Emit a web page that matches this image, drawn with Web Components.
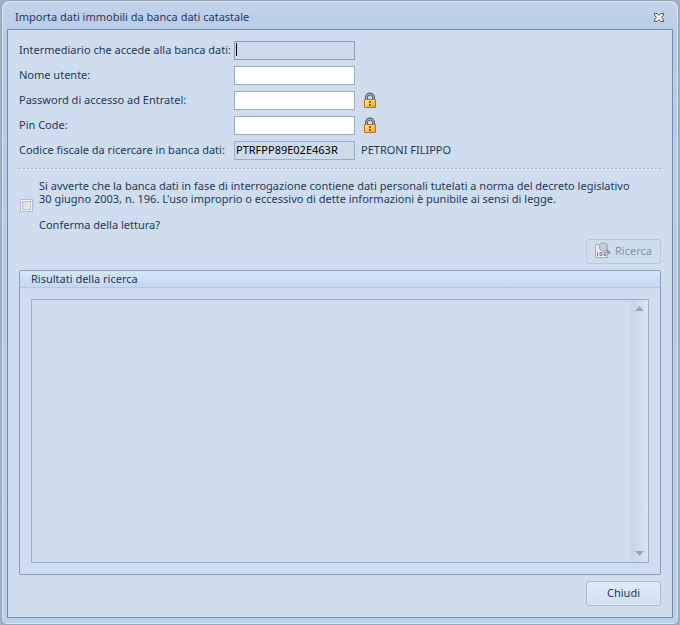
<!DOCTYPE html>
<html lang="it">
<head>
<meta charset="utf-8">
<meta name="viewport" content="width=device-width, initial-scale=1">
<title>Importa dati immobili da banca dati catastale</title>
<style>
:root {
    --color-text: #1e395b;
    --color-panel: #cfddee;
    --color-frame: #6f8fb0;
    --color-border: #9babc8;
    --color-group: #849dbd;
}

body {
    margin: 0;
    min-height: 100vh;
    display: flex;
    background: #a3adbc;
    color: var(--color-text);
    font: 11px/13px "Noto Sans", "Open Sans", sans-serif;
}
</style>
</head>
<body>
<imm-dialog title-text="Importa dati immobili da banca dati catastale">
    <imm-form>
        <imm-field label="Intermediario che accede alla banca dati:" state="active"></imm-field>
        <imm-field label="Nome utente:"></imm-field>
        <imm-field label="Password di accesso ad Entratel:" type="password"><imm-lock></imm-lock></imm-field>
        <imm-field label="Pin Code:" type="password"><imm-lock></imm-lock></imm-field>
        <imm-field label="Codice fiscale da ricercare in banca dati:" value="PTRFPP89E02E463R" state="readonly">PETRONI FILIPPO</imm-field>
    </imm-form>
    <imm-consent>
        Si avverte che la banca dati in fase di interrogazione contiene dati personali tutelati a norma del decreto legislativo
        30 giugno 2003, n. 196. L'uso improprio o eccessivo di dette informazioni è punibile ai sensi di legge.
        <br><br>Conferma della lettura?
    </imm-consent>
    <imm-button disabled><imm-search-icon></imm-search-icon>Ricerca</imm-button>
    <imm-group heading="Risultati della ricerca">
        <imm-list></imm-list>
    </imm-group>
    <imm-button>Chiudi</imm-button>
</imm-dialog>

<script>
class Base extends HTMLElement {
    connectedCallback() {
        const template = document.createElement("template");
        template.innerHTML = `<style>* { box-sizing: border-box; }</style>${this.render()}`;
        this.attachShadow({ mode: "open" }).appendChild(template.content.cloneNode(true));
    }

    attr(name) {
        return this.getAttribute(name) || "";
    }
}

/* Window frame with title bar */
class Dialog extends Base {
    render() {
        return `
        <style>
        :host {
            flex: 1;
            display: flex;
            box-sizing: border-box;
            min-width: 0;
            padding: 0 1px;
        }
        section {
            flex: 1;
            min-width: 0;
            display: flex;
            flex-direction: column;
            padding: 0 5px 6px;
            border: 1px solid #98a6ba;
            border-radius: 8px 8px 6px 6px;
            box-shadow: inset 0 0 0 1px #d9e5f3;
            background: linear-gradient(#c3d4eb, #b9cce5 30px, #bccfe7);
        }
        header {
            height: 28px;
            display: flex;
            align-items: center;
            justify-content: space-between;
            padding: 4px 8px 0;
            box-sizing: border-box;
        }
        h1 {
            margin: 0;
            font-size: 11px;
            line-height: 16px;
            font-weight: normal;
        }
        button {
            padding: 0;
            border: 0;
            background: none;
            display: flex;
        }
        main {
            flex: 1;
            display: flex;
            flex-direction: column;
            padding: 8px 11px 11px;
            border: 1px solid var(--color-frame);
            background: var(--color-panel);
        }
        ::slotted(imm-button) { align-self: flex-end; }
        </style>
        <section role="dialog" aria-labelledby="title">
            <header>
                <h1 id="title">${this.attr("title-text")}</h1>
                <button type="button" aria-label="Chiudi finestra">
                    <svg width="12" height="11" viewBox="0 0 12 11">
                        <path d="M1.500 1.500h2.500l2 2 2-2h2.500v1.500L8.500 5.500l2 2.500v1.500H8l-2-2-2 2H1.500V8l2-2.500-2-2.500z" fill="#fff" stroke="#4a4f63" stroke-linejoin="round"/>
                    </svg>
                </button>
            </header>
            <main><slot></slot></main>
        </section>`;
    }
}

class Form extends Base {
    render() {
        return `
        <style>
        :host {
            display: flex;
            flex-direction: column;
            padding: 0 0 5px;
        }
        div {
            height: 2px;
            margin-top: 5px;
            background:
                repeating-linear-gradient(90deg, #a8b6ca 0 2px, transparent 2px 4px) 0 0 / 100% 1px no-repeat,
                repeating-linear-gradient(90deg, #edf3fa 0 2px, transparent 2px 4px) 1px 1px / 100% 1px no-repeat;
        }
        </style>
        <slot></slot>
        <div role="separator"></div>`;
    }
}

class Field extends Base {
    render() {
        const state = this.attr("state");
        return `
        <style>
        :host {
            display: grid;
            grid-template-columns: 215px 121px auto;
            align-items: center;
            height: 25px;
        }
        input {
            width: 100%;
            height: 19px;
            margin: 0;
            padding: 0 1px 2px;
            border: 1px solid var(--color-border);
            border-radius: 0;
            outline: 0;
            background: #fff;
            color: #000;
            font: inherit;
        }
        input[readonly] { background: #cedbeb; }
        label {
            padding-bottom: 2px;
            white-space: nowrap;
        }
        .active {
            border-color: #8ba0be;
            /* text cursor */
            background: linear-gradient(#000, #000) 1px 1px / 1px 13px no-repeat #cedbeb;
        }
        span { padding: 0 0 2px 6px; }
        ::slotted(imm-lock) { margin-bottom: -2px; }
        </style>
        <label for="field">${this.attr("label")}</label>
        <input id="field" type="${this.attr("type") || "text"}" value="${this.attr("value")}" class="${state}" ${state === "readonly" ? "readonly" : ""}>
        <span><slot></slot></span>`;
    }
}

class Lock extends Base {
    render() {
        return `
        <style>
        :host { display: block; height: 17px; padding-left: 2px; }
        svg { display: block; }
        </style>
        <svg width="14" height="17" viewBox="0 0 14 17">
            <defs>
                <linearGradient id="gold" x2="1" y2="1">
                    <stop stop-color="#ffefad"/>
                    <stop offset=".55" stop-color="#ffc947"/>
                    <stop offset="1" stop-color="#f19b14"/>
                </linearGradient>
            </defs>
            <path d="M3.500 8V5.500a3.500 3.500 0 0 1 7 0V8" fill="none" stroke="#596069" stroke-width="3"/>
            <path d="M3.500 8V5.500a3.500 3.500 0 0 1 7 0V8" fill="none" stroke="#b4bac1" stroke-width="1"/>
            <rect x="1.500" y="7.500" width="11" height="8" rx=".5" fill="url(#gold)" stroke="#b96d20"/>
            <path d="M6 9h2v2H6zM6 12h2v2H6z" fill="#74604a"/>
        </svg>`;
    }
}

class Consent extends Base {
    render() {
        return `
        <style>
        :host { display: block; padding-bottom: 8px; }
        label {
            display: grid;
            grid-template-columns: 20px 1fr;
            align-items: center;
            padding: 4px 0 0;
        }
        input {
            appearance: none;
            width: 13px;
            height: 13px;
            margin: 0 0 0 1px;
            border: 1px solid #a9bcda;
            background: linear-gradient(135deg, #d5d7da, #f2f3f4) content-box, #f5f6f8;
            padding: 2px;
            box-shadow: inset 0 0 0 1px #f4f6f8, inset 0 0 0 2px #b6bbc4;
        }
        span { max-width: 600px; }
        </style>
        <label><input type="checkbox"><span><slot></slot></span></label>`;
    }
}

class Button extends Base {
    render() {
        return `
        <style>
        :host { display: block; }
        button {
            width: 75px;
            height: 25px;
            display: flex;
            align-items: center;
            justify-content: center;
            gap: 4px;
            padding: 0 0 2px;
            border: 1px solid #abbad0;
            border-radius: 3px;
            background: linear-gradient(#e1ecf8, #d1dfee);
            box-shadow: inset 0 0 0 1px #e0eaf5;
            color: var(--color-text);
            font: inherit;
        }
        button:disabled {
            border-color: #b6c8dc;
            background: #cfdeec;
            box-shadow: none;
            color: #8391a9;
        }
        </style>
        <button type="button" ${this.hasAttribute("disabled") ? "disabled" : ""}><slot></slot></button>`;
    }
}

class SearchIcon extends Base {
    render() {
        return `
        <style>
        :host, svg { display: block; }
        </style>
        <svg width="16" height="17" viewBox="0 0 16 17" fill="none">
            <path d="M.5 2.500h12v13H.5z" fill="#e8ecf1" stroke="#a7afba"/>
            <path d="M2.500 10v4M5 10.500h2v3H5zM9 10.500h2v3H9z" stroke="#818a96"/>
            <circle cx="8.500" cy="5" r="4" fill="#d2dae4" stroke="#a3acb8" stroke-width="1.500"/>
            <circle cx="8.500" cy="5" r="1.500" fill="#edf1f5" stroke="#9ba5b2"/>
            <path d="m11.500 8 3.500 3.500" stroke="#8f99a7" stroke-width="2.500"/>
        </svg>`;
    }
}

class Group extends Base {
    render() {
        return `
        <style>
        :host {
            flex: 1;
            display: flex;
            margin: 6px 0;
        }
        section {
            flex: 1;
            display: flex;
            flex-direction: column;
            border: 1px solid var(--color-group);
            border-radius: 2px;
        }
        h2 {
            margin: 0;
            padding: 1px 11px 2px;
            border-bottom: 1px solid #b2c7e2;
            background: linear-gradient(#d7e6f8, #c4d8f1);
            font-size: inherit;
            font-weight: normal;
            height: 17px;
            line-height: 13px;
        }
        div {
            flex: 1;
            display: flex;
            padding: 11px;
        }
        </style>
        <section aria-labelledby="heading">
            <h2 id="heading">${this.attr("heading")}</h2>
            <div><slot></slot></div>
        </section>`;
    }
}

class List extends Base {
    render() {
        return `
        <style>
        :host {
            flex: 1;
            display: flex;
            border: 1px solid #9badc6;
        }
        .items { flex: 1; }
        .scroll {
            width: 17px;
            display: flex;
            flex-direction: column;
            justify-content: space-between;
            background: linear-gradient(90deg, #c6d6e7, #d9e5f2);
        }
        button {
            width: 17px;
            height: 17px;
            display: flex;
            align-items: center;
            justify-content: center;
            padding: 0;
            border: 0;
            background: none;
        }
        </style>
        <div class="items"><slot></slot></div>
        <div class="scroll">
            <button type="button" aria-label="Su" disabled>
                <svg width="9" height="5"><path d="M0 5 4.500 0 9 5z" fill="#98a6bc"/></svg>
            </button>
            <button type="button" aria-label="Giù" disabled>
                <svg width="9" height="5"><path d="M0 0h9L4.500 5z" fill="#98a6bc"/></svg>
            </button>
        </div>`;
    }
}

customElements.define("imm-dialog", Dialog);
customElements.define("imm-form", Form);
customElements.define("imm-field", Field);
customElements.define("imm-lock", Lock);
customElements.define("imm-consent", Consent);
customElements.define("imm-button", Button);
customElements.define("imm-search-icon", SearchIcon);
customElements.define("imm-group", Group);
customElements.define("imm-list", List);
</script>
</body>
</html>
